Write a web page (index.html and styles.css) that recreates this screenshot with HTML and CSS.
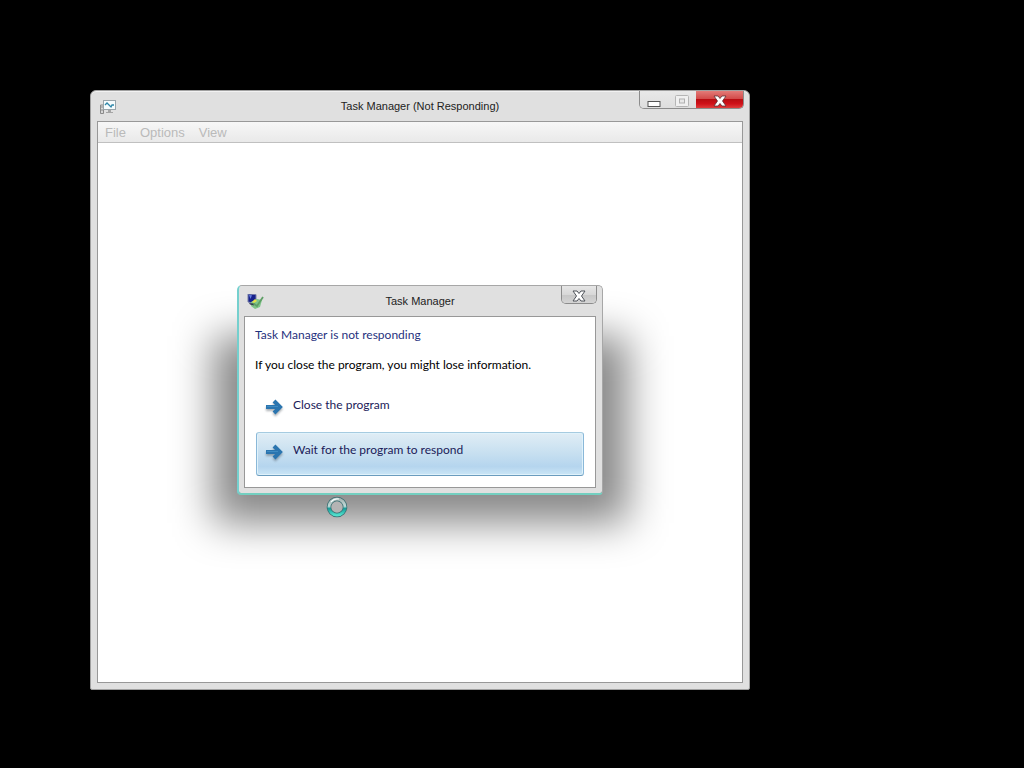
FILE: index.html
```html
<!DOCTYPE html>
<html lang="en">
<head>
<meta charset="utf-8">
<meta name="viewport" content="width=device-width, initial-scale=1">
<title>Task Manager (Not Responding)</title>
<link rel="stylesheet" href="styles.css">
</head>
<body>
<main class="desktop">
  <section class="window main-window">
    <header class="titlebar">
      <svg class="app-icon" viewBox="0 0 18 16" aria-hidden="true">
        <path d="M1.500 6h3v8.500h-3zM2 8h2M2 11h2" fill="#d8d8d8" stroke="#8b8b8b"/>
        <rect x="4.500" y="1.500" width="12" height="9" fill="#f5fbfd" stroke="#98a4aa"/>
        <path d="M6 6l2-2 4 4 1-2h2" fill="none" stroke="#2d86a8" stroke-width="1.300"/>
        <path d="M9 11h3v2h2v1H7v-1h2z" fill="#a5a5a5"/>
      </svg>
      <h1 class="title">Task Manager (Not Responding)</h1>
      <div class="controls">
        <button class="control minimize" aria-label="Minimize"><svg viewBox="0 0 14 6"><rect x="1" y=".5" width="12" height="5" fill="#fff" stroke="#555"/></svg></button>
        <button class="control maximize" aria-label="Maximize" disabled><svg viewBox="0 0 14 12"><path d="M.5 1.500q0-1 1-1h11q1 0 1 1v9q0 1-1 1h-11q-1 0-1-1z" fill="#f0f0f0" stroke="#b5b5b5"/><rect x="4.500" y="4" width="5" height="4" fill="#e8e8e8" stroke="#b0b0b0"/></svg></button>
        <button class="control close close-red" aria-label="Close"><svg viewBox="0 0 14 12"><path d="M1 1h4l2 2.500L9 1h4L9.500 6 13 11H9L7 8.500 5 11H1l3.500-5z" fill="#fff" stroke="#5c3035" stroke-width=".8"/></svg></button>
      </div>
    </header>
    <div class="client main-client">
      <nav class="menubar" aria-label="Menu">
        <button class="menu-item">File</button>
        <button class="menu-item">Options</button>
        <button class="menu-item">View</button>
      </nav>
    </div>

    <div class="dialog-layer">
      <section class="window dialog" role="dialog" aria-labelledby="dialog-title">
        <header class="titlebar">
          <svg class="app-icon" viewBox="0 0 18 16" aria-hidden="true">
            <path d="M2 0l8 .5v9L2 8z" fill="#16208c" stroke="#777fa8"/>
            <path d="M3 1l3 .2L4.500 5z" fill="#6781e0"/>
            <path d="M5 8l6-3 5 1-2 7-5 2-4-3z" fill="#7fc488"/>
            <path d="M7 9l4 3 6-9" fill="none" stroke="#5f9f66" stroke-width="1.800"/>
            <path d="M6 8l3-3 2 2-3 2z" fill="#e5df4b"/>
            <path d="M3 9l4 .5 1 2-4-1z" fill="#32394d"/>
          </svg>
          <h2 class="title" id="dialog-title">Task Manager</h2>
          <div class="controls">
            <button class="control close" aria-label="Close"><svg viewBox="0 0 14 12"><path d="M1 1h4l2 2.500L9 1h4L9.500 6 13 11H9L7 8.500 5 11H1l3.500-5z" fill="#fff" stroke="#4e5259"/></svg></button>
          </div>
        </header>
        <div class="client dialog-client">
          <p class="instruction">Task Manager is not responding</p>
          <p class="message">If you close the program, you might lose information.</p>
          <div class="commands">
            <button class="command">
              <svg class="arrow" viewBox="0 0 20 20" aria-hidden="true"><path d="M1 10h14M9 4l6 6-6 6" fill="none" stroke="#2b75af" stroke-width="4"/><path d="M2 9.500h11" stroke="#3f8bc2"/></svg>
              <span>Close the program</span>
            </button>
            <button class="command selected">
              <svg class="arrow" viewBox="0 0 20 20" aria-hidden="true"><path d="M1 10h14M9 4l6 6-6 6" fill="none" stroke="#2b75af" stroke-width="4"/><path d="M2 9.500h11" stroke="#3f8bc2"/></svg>
              <span>Wait for the program to respond</span>
            </button>
          </div>
        </div>
      </section>
    </div>
  </section>
  <svg class="busy-cursor" viewBox="0 0 22 22" aria-hidden="true">
    <defs><linearGradient id="ring" x1="0" y1="0" x2="0" y2="1"><stop offset="0" stop-color="#a7b4b2"/><stop offset=".45" stop-color="#c2dcda"/><stop offset=".6" stop-color="#159b98"/><stop offset="1" stop-color="#51e0cc"/></linearGradient></defs>
    <circle cx="11" cy="11" r="8" fill="#b4b4b4" stroke="#356d70" stroke-width="4.500"/>
    <circle cx="11" cy="11" r="8" fill="none" stroke="url(#ring)" stroke-width="3"/>
    <path d="M5 6q3-4 8-3" fill="none" stroke="#f4ffff" stroke-width="1.200"/>
  </svg>
</main>
</body>
</html>
```
FILE: styles.css
```css
* { box-sizing: border-box; }
body { margin: 0; background: #000; }
h1, h2, p { margin: 0; font-weight: 400; }
button { font: inherit; color: inherit; border: 0; background: none; padding: 0; }

.desktop {
  position: relative;
  min-height: 100vh;
  overflow: hidden;
  font-family: Lato, "Open Sans", sans-serif;
  font-size: 12px;
  line-height: 16px;
}

.window {
  display: flex;
  flex-direction: column;
  padding: 0 6px 6px;
  background: #e0e0e0;
  border: 1px solid #a0a0a0;
  border-radius: 6px 6px 2px 2px;
}
.main-window {
  position: absolute;
  top: 90px;
  right: 274px;
  bottom: 78px;
  left: 90px;
  box-shadow: inset 0 1px #f2f2f2;
}

.titlebar {
  display: grid;
  grid-template-columns: 1fr auto 1fr;
  align-items: center;
  height: 30px;
  font-family: "Liberation Sans", sans-serif;
  font-size: 11px;
  color: #222;
}
.title { font-size: 11px; line-height: 16px; }
.app-icon { width: 18px; height: 16px; margin: 2px 0 0 2px; }
.controls {
  display: flex;
  justify-self: end;
  align-self: start;
  height: 18px;
  margin-right: -1px;
  border: 1px solid #8c8c8c;
  border-top: 0;
  border-radius: 0 0 5px 5px;
  overflow: hidden;
}
.control {
  display: grid;
  place-items: center;
  width: 28px;
  background: linear-gradient(#e6e6e6, #d8d8d8 50%, #c8c8c8 55%, #d4d4d4);
}
.control svg { width: 14px; height: 12px; }
.main-window > .titlebar .control { background: linear-gradient(#e8e8e8, #dedede); }
.minimize svg { height: 6px; margin-top: 8px; }
.maximize svg { margin-top: 2px; }
.control.close { width: 34px; }
.main-window > .titlebar .close-red {
  width: 47px;
  background: linear-gradient(#e37b78, #d34b4a 45%, #b90d12 50%, #cf1119 75%, #e03c3c);
}
.close svg { margin-top: 2px; }

.client { background: #fff; border: 1px solid #989898; }
.main-client { flex: 1; }
.menubar {
  display: flex;
  gap: 14px;
  height: 21px;
  padding: 1px 7px 0;
  background: linear-gradient(#f7f7f7, #e9e9e9);
  border-bottom: 1px solid #c0c0c0;
  font-family: "Liberation Sans", sans-serif;
  font-size: 13px;
  color: #bababa;
}

.dialog-layer {
  position: absolute;
  z-index: 0;
  inset: 0;
  display: grid;
  place-items: center;
}
.dialog {
  position: relative;
  width: 366px;
  padding: 0 6px 5px 5px;
  background: none;
  border-color: #a7a7a7;
  border-left: 2px solid #75d0ce;
  border-bottom: 2px solid #73cfc0;
  border-radius: 5px 5px 4px 4px;
}
.dialog::before,
.dialog::after {
  content: "";
  position: absolute;
}
.dialog::before {
  z-index: -2;
  inset: 50px -26px -30px;
  background: rgba(0, 0, 0, .47);
  filter: blur(20px);
}
.dialog::after {
  z-index: -1;
  inset: 0;
  background: #e0e0e0;
  border-radius: 4px 4px 2px 2px;
}
.dialog-client {
  padding: 10px 10px 11px;
  font-variant-ligatures: none;
}
.instruction { color: #1f317e; }
.message { margin-top: 14px; color: #000; }
.commands {
  display: grid;
  gap: 1px;
  margin: 14px 1px 0;
}
.command {
  display: flex;
  align-items: flex-start;
  gap: 8px;
  height: 44px;
  padding: 9px 8px;
  border: 1px solid transparent;
  border-radius: 3px;
  color: #1b1b59;
  text-align: left;
}
.command.selected {
  border-color: #a6cbe0 #8ab8d8 #6b9cbe;
  background: linear-gradient(#e0edf5, #c6dff0 50%, #b5d5ee 80%, #cbe6f6);
  box-shadow: inset 0 0 0 1px #e0f2fb;
}
.arrow {
  width: 20px;
  height: 20px;
  filter: drop-shadow(0 2px 1px rgba(50, 60, 70, .4));
}

.busy-cursor {
  position: absolute;
  top: 496px;
  left: 326px;
  width: 22px;
  height: 22px;
}
```
